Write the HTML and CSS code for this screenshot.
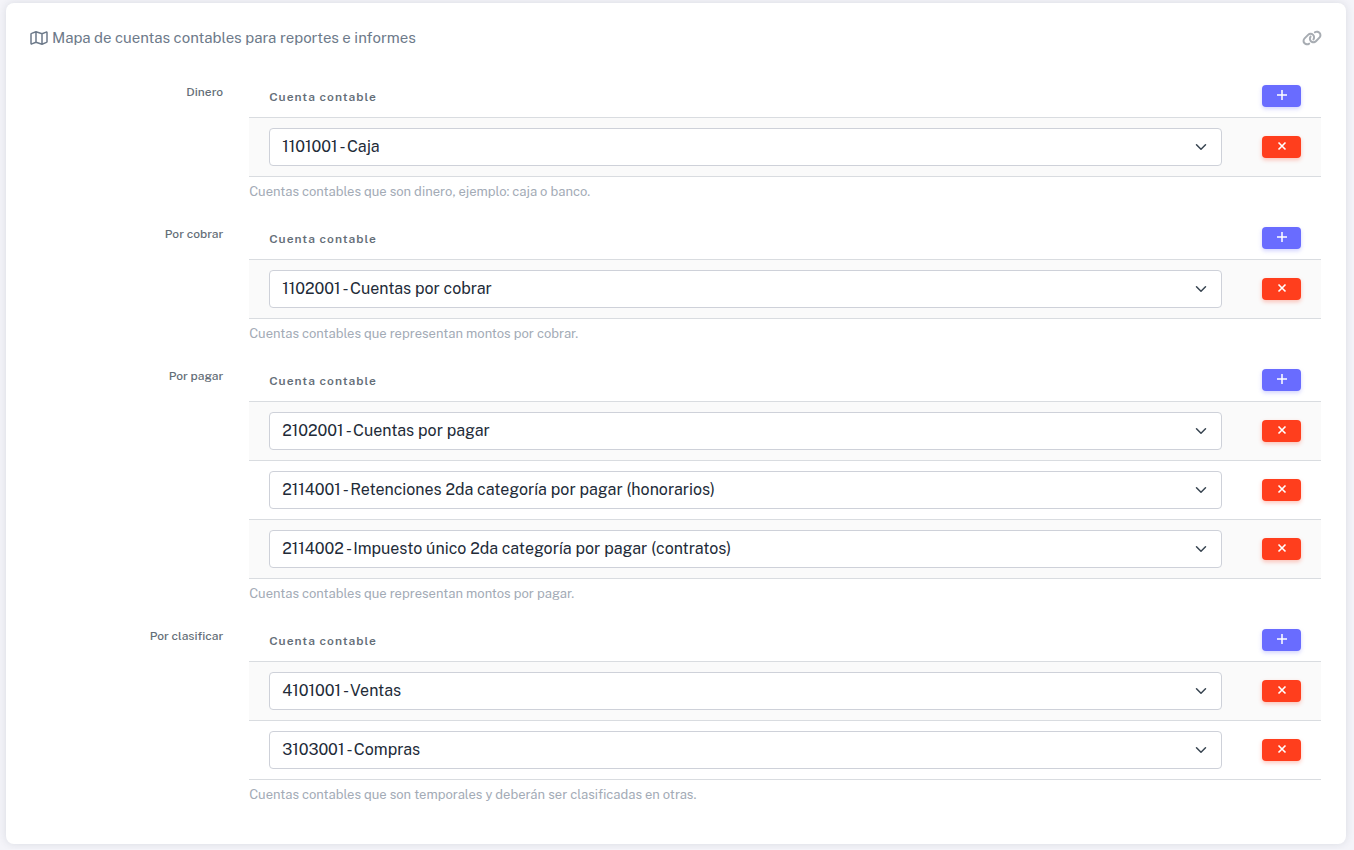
FILE: index.html
```
<!DOCTYPE html>
<html lang="es">
<head>
<meta charset="utf-8">
<meta name="viewport" content="width=device-width, initial-scale=1">
<title>Mapa de cuentas contables</title>
<link rel="stylesheet" href="styles.css">
</head>
<body>
<svg class="sprite" aria-hidden="true">
  <symbol id="plus" viewBox="0 0 12 12"><path d="M6 1v10M1 6h10" fill="none" stroke="currentColor" stroke-width="1.5"/></symbol>
  <symbol id="times" viewBox="0 0 12 12"><path d="M2.500 2.500l7 7M9.500 2.500l-7 7" fill="none" stroke="currentColor" stroke-width="1.600"/></symbol>
  <symbol id="chevron" viewBox="0 0 16 16"><path d="M2 5l6 6 6-6" fill="none" stroke="currentColor" stroke-width="2" stroke-linecap="round" stroke-linejoin="round"/></symbol>
</svg>
<main class="card">
  <header class="card-header">
    <h1 class="title">
      <svg class="title-icon" viewBox="0 0 18 16" fill="none" stroke="currentColor" stroke-width="1.5" stroke-linejoin="round" aria-hidden="true"><path d="M1 4.2Q1 3.6 1.6 3.4L6 1.8l6 2 4.2-1.7q.8-.2.8.6v9q0 .5-.5.7L12 14.200l-6-2-4.200 1.700q-.8.2-.8-.6zM6 1.800v10.400M12 3.800v10.400"/></svg>
      Mapa de cuentas contables para reportes e informes
    </h1>
    <a class="permalink" href="#mapa" aria-label="Enlace a esta sección">
      <svg viewBox="0 0 640 512" fill="currentColor" aria-hidden="true"><path d="M579.800 267.700c56.500-56.500 56.500-148 0-204.500c-50-50-128.800-56.500-186.300-15.400l-1.600 1.100c-14.400 10.300-17.700 30.300-7.400 44.600s30.300 17.700 44.600 7.400l1.600-1.100c32.100-22.900 76-19.300 103.800 8.600c31.500 31.500 31.500 82.500 0 114L422.300 334.800c-31.500 31.500-82.500 31.500-114 0c-27.900-27.900-31.500-71.800-8.600-103.800l1.100-1.600c10.300-14.400 6.900-34.400-7.400-44.600s-34.400-6.900-44.600 7.400l-1.100 1.600C206.500 251.200 213 330 263 380c56.500 56.500 148 56.500 204.500 0L579.800 267.700zM60.200 244.300c-56.500 56.500-56.500 148 0 204.500c50 50 128.800 56.500 186.300 15.400l1.600-1.100c14.400-10.300 17.700-30.300 7.400-44.600s-30.300-17.700-44.600-7.400l-1.600 1.100c-32.100 22.900-76 19.300-103.800-8.600C74 372 74 321 105.500 289.500L217.700 177.200c31.500-31.500 82.500-31.500 114 0c27.900 27.900 31.500 71.800 8.600 103.900l-1.100 1.600c-10.300 14.400-6.900 34.400 7.400 44.600s34.400 6.900 44.600-7.400l1.100-1.600C433.500 260.800 427 182 377 132c-56.500-56.500-148-56.500-204.500 0L60.200 244.300z"/></svg>
    </a>
  </header>

  <section class="group">
    <h2 class="group-label">Dinero</h2>
    <div class="group-body">
      <table class="accounts">
        <thead><tr><th scope="col">Cuenta contable</th><th class="action"><button class="btn btn-add" type="button" aria-label="Agregar"><svg><use href="#plus"/></svg></button></th></tr></thead>
        <tbody>
          <tr><td><div class="select"><select aria-label="Dinero 1"><option>1101001 - Caja</option></select><svg><use href="#chevron"/></svg></div></td><td class="action"><button class="btn btn-remove" type="button" aria-label="Quitar"><svg><use href="#times"/></svg></button></td></tr>
        </tbody>
      </table>
      <p class="help">Cuentas contables que son dinero, ejemplo: caja o banco.</p>
    </div>
  </section>

  <section class="group">
    <h2 class="group-label">Por cobrar</h2>
    <div class="group-body">
      <table class="accounts">
        <thead><tr><th scope="col">Cuenta contable</th><th class="action"><button class="btn btn-add" type="button" aria-label="Agregar"><svg><use href="#plus"/></svg></button></th></tr></thead>
        <tbody>
          <tr><td><div class="select"><select aria-label="Por cobrar 1"><option>1102001 - Cuentas por cobrar</option></select><svg><use href="#chevron"/></svg></div></td><td class="action"><button class="btn btn-remove" type="button" aria-label="Quitar"><svg><use href="#times"/></svg></button></td></tr>
        </tbody>
      </table>
      <p class="help">Cuentas contables que representan montos por cobrar.</p>
    </div>
  </section>

  <section class="group">
    <h2 class="group-label">Por pagar</h2>
    <div class="group-body">
      <table class="accounts">
        <thead><tr><th scope="col">Cuenta contable</th><th class="action"><button class="btn btn-add" type="button" aria-label="Agregar"><svg><use href="#plus"/></svg></button></th></tr></thead>
        <tbody>
          <tr><td><div class="select"><select aria-label="Por pagar 1"><option>2102001 - Cuentas por pagar</option></select><svg><use href="#chevron"/></svg></div></td><td class="action"><button class="btn btn-remove" type="button" aria-label="Quitar"><svg><use href="#times"/></svg></button></td></tr>
          <tr><td><div class="select"><select aria-label="Por pagar 2"><option>2114001 - Retenciones 2da categoría por pagar (honorarios)</option></select><svg><use href="#chevron"/></svg></div></td><td class="action"><button class="btn btn-remove" type="button" aria-label="Quitar"><svg><use href="#times"/></svg></button></td></tr>
          <tr><td><div class="select"><select aria-label="Por pagar 3"><option>2114002 - Impuesto único 2da categoría por pagar (contratos)</option></select><svg><use href="#chevron"/></svg></div></td><td class="action"><button class="btn btn-remove" type="button" aria-label="Quitar"><svg><use href="#times"/></svg></button></td></tr>
        </tbody>
      </table>
      <p class="help">Cuentas contables que representan montos por pagar.</p>
    </div>
  </section>

  <section class="group">
    <h2 class="group-label">Por clasificar</h2>
    <div class="group-body">
      <table class="accounts">
        <thead><tr><th scope="col">Cuenta contable</th><th class="action"><button class="btn btn-add" type="button" aria-label="Agregar"><svg><use href="#plus"/></svg></button></th></tr></thead>
        <tbody>
          <tr><td><div class="select"><select aria-label="Por clasificar 1"><option>4101001 - Ventas</option></select><svg><use href="#chevron"/></svg></div></td><td class="action"><button class="btn btn-remove" type="button" aria-label="Quitar"><svg><use href="#times"/></svg></button></td></tr>
          <tr><td><div class="select"><select aria-label="Por clasificar 2"><option>3103001 - Compras</option></select><svg><use href="#chevron"/></svg></div></td><td class="action"><button class="btn btn-remove" type="button" aria-label="Quitar"><svg><use href="#times"/></svg></button></td></tr>
        </tbody>
      </table>
      <p class="help">Cuentas contables que son temporales y deberán ser clasificadas en otras.</p>
    </div>
  </section>
</main>
</body>
</html>
```
FILE: styles.css
```
* { box-sizing: border-box; }

body {
  margin: 0;
  padding: 3px 8px 5px 6px;
  background: #f4f4f9;
  color: #22303e;
  font-family: "Public Sans", Roboto, "Liberation Sans", sans-serif;
}

.sprite { display: none; }

.card {
  padding: 24px 24px 24px;
  background: #fff;
  border-radius: 8px;
  box-shadow: 0 0 8px rgba(34, 48, 62, 0.12);
}

.card-header {
  display: flex;
  align-items: center;
  justify-content: space-between;
  height: 22px;
  margin-bottom: 26px;
}

.title {
  display: flex;
  align-items: center;
  gap: 4px;
  margin: 0;
  color: #6d7a8a;
  font-size: 15px;
  font-weight: 400;
  line-height: 20px;
}

.title-icon { width: 18px; height: 16px; }

.permalink { display: flex; color: #a7acb2; }
.permalink svg { width: 20px; height: 16px; }

.group {
  display: flex;
  margin: 0 -11px 15px -12px;
}

.group-label {
  flex: 0 0 16.6667%;
  margin: 0;
  padding: 9px 14px 0 12px;
  color: #646e78;
  font-size: 12px;
  font-weight: 500;
  line-height: 16px;
  text-align: right;
}

.group-body {
  flex: 1;
  min-width: 0;
  padding: 0 12px;
}

.accounts {
  width: 100%;
  border-collapse: separate;
  border-spacing: 0;
}

.accounts th,
.accounts td {
  padding: 10px 20px;
  border-bottom: 1px solid #d9dce0;
  text-align: left;
  vertical-align: middle;
}

.accounts th {
  color: #646e78;
  font-size: 12px;
  font-weight: 600;
  letter-spacing: 1px;
  line-height: 16px;
}

.accounts th:first-child { padding-bottom: 8px; }
.accounts .action { width: 79px; }
.accounts tbody tr:nth-child(odd) { background: #fafafa; }

.select {
  display: grid;
  align-items: center;
}

.select > * { grid-area: 1 / 1; }

.select select {
  appearance: none;
  width: 100%;
  height: 38px;
  padding: 0 36px 1px 12px;
  border: 1px solid #ced1d9;
  border-radius: 4px;
  background: #fff;
  color: #222b38;
  font: inherit;
  font-size: 16px;
}

.select svg {
  justify-self: end;
  width: 12px;
  height: 12px;
  margin-right: 15px;
  color: #384551;
  pointer-events: none;
}

.btn {
  display: flex;
  align-items: center;
  justify-content: center;
  width: 39px;
  height: 22px;
  padding: 0 0 2px;
  border: 0;
  border-radius: 4px;
  color: #fff;
}

.btn svg { width: 12px; height: 12px; }
.btn-add { background: #696cff; box-shadow: 0 2px 4px rgba(105, 108, 255, 0.3); }
.btn-remove { background: #ff3e1d; box-shadow: 0 2px 4px rgba(255, 62, 29, 0.3); }

.help {
  margin: 5px 0 0;
  color: #a3abb6;
  font-size: 13px;
  line-height: 20px;
}
```
